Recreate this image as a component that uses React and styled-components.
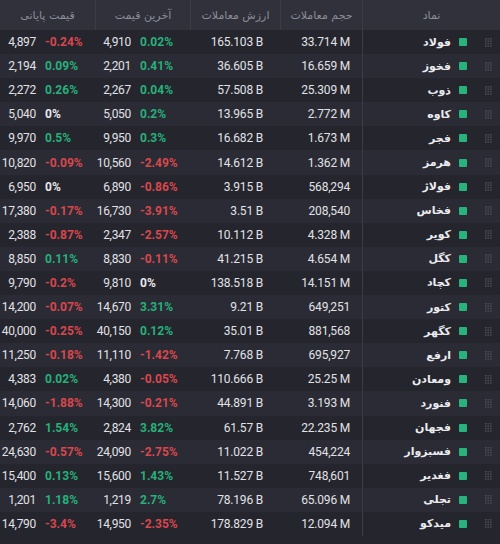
import React from 'react';
import styled, { createGlobalStyle } from 'styled-components';

const rows = [
  ['فولاد', '33.714 M', '165.103 B', '4,910', '0.02%', '4,897', '-0.24%'],
  ['فخوز', '16.659 M', '36.605 B', '2,201', '0.41%', '2,194', '0.09%'],
  ['ذوب', '25.309 M', '57.508 B', '2,267', '0.04%', '2,272', '0.26%'],
  ['کاوه', '2.772 M', '13.965 B', '5,050', '0.2%', '5,040', '0%'],
  ['فجر', '1.673 M', '16.682 B', '9,950', '0.3%', '9,970', '0.5%'],
  ['هرمز', '1.362 M', '14.612 B', '10,560', '-2.49%', '10,820', '-0.09%'],
  ['فولاژ', '568,294', '3.915 B', '6,890', '-0.86%', '6,950', '0%'],
  ['فخاس', '208,540', '3.51 B', '16,730', '-3.91%', '17,380', '-0.17%'],
  ['کویر', '4.328 M', '10.112 B', '2,347', '-2.57%', '2,388', '-0.87%'],
  ['کگل', '4.654 M', '41.215 B', '8,830', '-0.11%', '8,850', '0.11%'],
  ['کچاد', '14.151 M', '138.518 B', '9,810', '0%', '9,790', '-0.2%'],
  ['کتور', '649,251', '9.21 B', '14,670', '3.31%', '14,200', '-0.07%'],
  ['کگهر', '881,568', '35.01 B', '40,150', '0.12%', '40,000', '-0.25%'],
  ['ارفع', '695,927', '7.768 B', '11,110', '-1.42%', '11,250', '-0.18%'],
  ['ومعادن', '25.25 M', '110.666 B', '4,380', '-0.05%', '4,383', '0.02%'],
  ['فنورد', '3.193 M', '44.891 B', '14,300', '-0.21%', '14,060', '-1.88%'],
  ['فجهان', '22.235 M', '61.57 B', '2,824', '3.82%', '2,762', '1.54%'],
  ['فسبزوار', '454,224', '11.022 B', '24,090', '-2.75%', '24,630', '-0.57%'],
  ['فغدیر', '748,601', '11.527 B', '15,600', '1.43%', '15,400', '0.13%'],
  ['تجلی', '65.096 M', '78.196 B', '1,219', '2.7%', '1,201', '1.18%'],
  ['میدکو', '12.094 M', '178.829 B', '14,950', '-2.35%', '14,790', '-3.4%'],
];

const GlobalStyle = createGlobalStyle`
  body {
    margin: 0;
    background: #24252d;
    font-family: Roboto, "DejaVu Sans", sans-serif;
  }
`;

const Table = styled.div`
  width: 500px;
  background: #24252d;
`;

const Grid = styled.div`
  display: grid;
  grid-template-columns: 95px 95px 90px 82px 138px;
  align-items: stretch;
`;

const HeaderRow = styled(Grid)`
  height: 30px;
  background: #30313b;
`;

const HeaderCell = styled.div`
  display: flex;
  align-items: center;
  justify-content: center;
  font-family: "DejaVu Sans", sans-serif;
  font-size: 11px;
  color: #8b8c97;
  border-left: ${p => (p.$first ? 'none' : '1px solid #3b3c47')};
  direction: rtl;
`;

const Row = styled(Grid)`
  height: 24.1px;
  background: ${p => (p.$odd ? '#2a2b34' : '#24252d')};
`;

const PriceCell = styled.div`
  display: flex;
  align-items: center;
  font-size: 12px;
`;

const Price = styled.span`
  width: 36px;
  text-align: right;
  color: #e2e2e6;
  letter-spacing: -0.3px;
  flex-shrink: 0;
`;

const Change = styled.span`
  margin-left: 9px;
  font-weight: 700;
  color: ${p => p.$color};
`;

const NumCell = styled.div`
  display: flex;
  align-items: center;
  justify-content: flex-end;
  padding-right: ${p => p.$pad}px;
  font-size: 12px;
  color: #e2e2e6;
  letter-spacing: -0.2px;
`;

const SymbolCell = styled.div`
  display: flex;
  align-items: center;
  justify-content: flex-end;
  padding-right: 8px;
  border-left: 1px solid #3b3c47;
`;

const Name = styled.span`
  font-family: "DejaVu Sans", sans-serif;
  font-weight: 700;
  font-size: 11px;
  color: #ececf0;
  direction: rtl;
`;

const Dot = styled.span`
  width: 8px;
  height: 8px;
  margin-left: 8px;
  background: #27b37b;
  border-radius: 1px;
`;

const Grip = styled.svg`
  margin-left: 18px;
  display: block;
`;

const changeColor = v => {
  if (v === '0%') return '#e8e8ec';
  return v.startsWith('-') ? '#d9474d' : '#27b07a';
};

const GripIcon = () => (
  <Grip width="7" height="9" viewBox="0 0 7 9">
    {[0, 1, 2, 3].map(r =>
      [0, 1, 2].map(c => (
        <rect key={`${r}-${c}`} x={c * 2.5} y={r * 2.4} width="1.6" height="1.6" fill="#474855" />
      ))
    )}
  </Grip>
);

export default function App() {
  return (
    <>
      <GlobalStyle />
      <Table>
        <HeaderRow>
          <HeaderCell $first>قیمت پایانی</HeaderCell>
          <HeaderCell>آخرین قیمت</HeaderCell>
          <HeaderCell>ارزش معاملات</HeaderCell>
          <HeaderCell>حجم معاملات</HeaderCell>
          <HeaderCell>نماد</HeaderCell>
        </HeaderRow>
        {rows.map(([name, vol, val, last, lastCh, close, closeCh], i) => (
          <Row key={name} $odd={i % 2 === 1}>
            <PriceCell>
              <Price>{close}</Price>
              <Change $color={changeColor(closeCh)}>{closeCh}</Change>
            </PriceCell>
            <PriceCell>
              <Price>{last}</Price>
              <Change $color={changeColor(lastCh)}>{lastCh}</Change>
            </PriceCell>
            <NumCell $pad={17}>{val}</NumCell>
            <NumCell $pad={12}>{vol}</NumCell>
            <SymbolCell>
              <Name>{name}</Name>
              <Dot />
              <GripIcon />
            </SymbolCell>
          </Row>
        ))}
      </Table>
    </>
  );
}
